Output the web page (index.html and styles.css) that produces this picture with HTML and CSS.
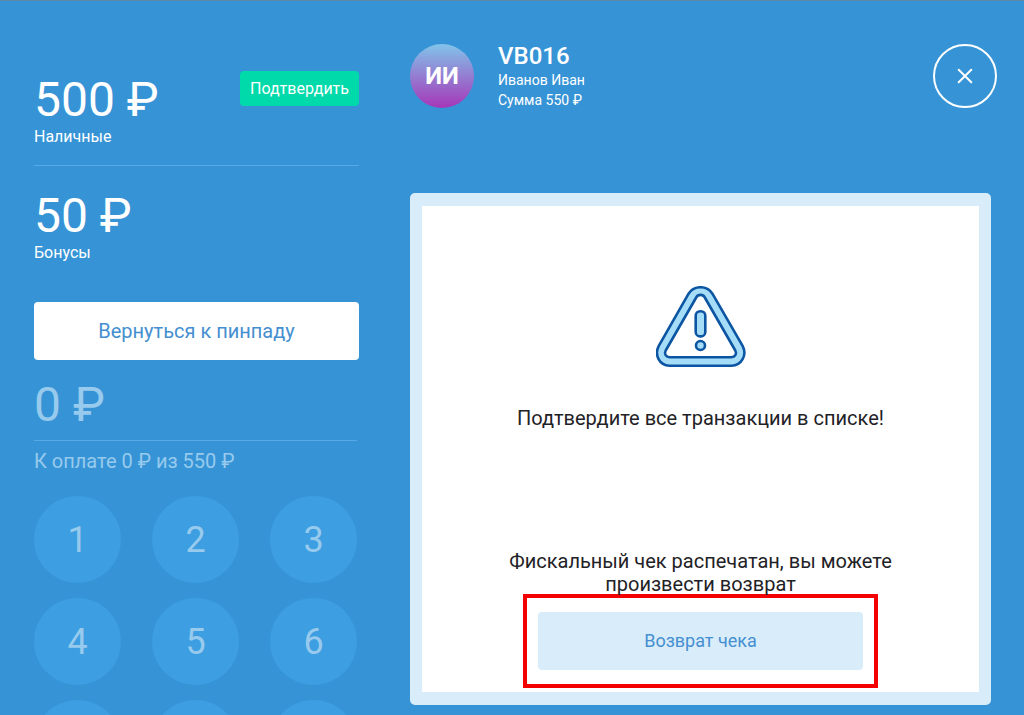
FILE: index.html
```html
<!DOCTYPE html>
<html lang="ru">
<head>
<meta charset="utf-8">
<title>Оплата</title>
<link rel="stylesheet" href="styles.css">
</head>
<body>
<div class="page">
  <aside class="payments">
    <section class="payment payment--divided">
      <div>
        <div class="amount">500 ₽</div>
        <div class="payment-label">Наличные</div>
      </div>
      <button class="confirm" type="button">Подтвердить</button>
    </section>
    <section class="payment">
      <div>
        <div class="amount">50 ₽</div>
        <div class="payment-label">Бонусы</div>
      </div>
    </section>
    <button class="back" type="button">Вернуться к пинпаду</button>
    <section class="pinpad">
      <div class="entry"><div class="amount">0 ₽</div></div>
      <div class="due">К оплате 0 ₽ из 550 ₽</div>
      <div class="keys">
        <button class="key" type="button">1</button>
        <button class="key" type="button">2</button>
        <button class="key" type="button">3</button>
        <button class="key" type="button">4</button>
        <button class="key" type="button">5</button>
        <button class="key" type="button">6</button>
        <button class="key" type="button" aria-label="7"></button>
        <button class="key" type="button" aria-label="8"></button>
        <button class="key" type="button" aria-label="9"></button>
      </div>
    </section>
  </aside>
  <main class="content">
    <header class="client">
      <div class="avatar">ИИ</div>
      <div class="client-info">
        <h1 class="client-code">VB016</h1>
        <div>Иванов Иван</div>
        <div>Сумма 550 ₽</div>
      </div>
      <button class="close" type="button" aria-label="Закрыть">
        <svg width="16" height="16" viewBox="0 0 16 16" fill="none" stroke="currentColor" stroke-width="2" stroke-linecap="round"><path d="M1.7 1.7 14.3 14.3M14.3 1.7 1.7 14.3"/></svg>
      </button>
    </header>
    <section class="panel">
      <div class="notice">
        <svg class="warning" width="90" height="82" viewBox="0 0 90 82" fill="none" stroke-linejoin="round">
          <path d="M32.6 7.7C38 -0.9 51 -0.9 56.400 7.700L86.600 59.800C91.400 69 85.600 79.700 75.500 79.700H13.500C3.400 79.700 -2 69 2.800 59.800Z" fill="#a5dcf8" stroke="#0b55a2" stroke-width="2.600"/>
          <path d="M40.200 11.500C42 8 47 8 48.800 11.500L79.300 64.500C81.200 68 79 71.200 75.300 71.200H13.700C10 71.200 7.800 68 9.700 64.500Z" fill="#fff" stroke="#0b55a2" stroke-width="2.600"/>
          <rect x="39.700" y="25.200" width="9.600" height="25.200" rx="4.500" fill="#a5dcf8" stroke="#0b55a2" stroke-width="2.600"/>
          <circle cx="44.500" cy="59.500" r="4.500" fill="#a5dcf8" stroke="#0b55a2" stroke-width="2.600"/>
        </svg>
        <p class="message">Подтвердите все транзакции в списке!</p>
      </div>
      <div class="refund">
        <p class="message">Фискальный чек распечатан, вы можете произвести возврат</p>
        <div class="refund-action">
          <button class="refund-button" type="button">Возврат чека</button>
        </div>
      </div>
    </section>
  </main>
</div>
</body>
</html>
```
FILE: styles.css
```css
* {
  box-sizing: border-box;
}

body {
  margin: 0;
  background: #3694d6;
  color: #fff;
  font-family: Roboto, "Noto Sans", sans-serif;
  font-size: 16px;
}

button {
  border: 0;
  padding: 0;
  font: inherit;
  cursor: pointer;
}

h1,
p {
  margin: 0;
}

.page {
  display: flex;
  gap: 51px;
  height: 100vh;
  padding: 0 27px 0 34px;
  border-top: 1px solid #6089a8;
  overflow: hidden;
}

.payments {
  flex: 0 0 325px;
  padding-top: 70px;
}

.payment {
  display: flex;
  justify-content: space-between;
  align-items: flex-start;
}

.payment--divided {
  padding-bottom: 18px;
  margin-bottom: 21px;
  border-bottom: 1px solid #57aae6;
}

.amount {
  margin-bottom: -2px;
  font-size: 48px;
  line-height: 58px;
}

.payment-label {
  line-height: 20px;
}

.confirm {
  padding: 0 10px;
  border-radius: 4px;
  background: #00d9a9;
  color: #fff;
  line-height: 35px;
}

.back {
  width: 100%;
  margin: 39px 0 16px;
  border-radius: 4px;
  background: #fff;
  color: #458fd0;
  font-size: 20px;
  line-height: 58px;
}

.pinpad {
  padding-right: 2px;
  color: #97caed;
}

.entry {
  padding-bottom: 8px;
  border-bottom: 1px solid #57aae6;
}

.due {
  margin: 8px 0 23px;
  font-size: 20px;
  line-height: 24px;
}

.keys {
  display: grid;
  grid-template-columns: repeat(3, 87px);
  justify-content: space-between;
  row-gap: 15px;
}

.key {
  height: 87px;
  border-radius: 50%;
  background: #3d9ee1;
  color: #97caed;
  font-size: 36px;
}

.content {
  flex: 1;
  display: flex;
  flex-direction: column;
  min-width: 0;
  padding: 43px 0 10px;
}

.client {
  display: flex;
  align-items: flex-start;
  gap: 24px;
  height: 64px;
  margin-bottom: 85px;
}

.avatar {
  width: 64px;
  border-radius: 50%;
  background: linear-gradient(#82c4ea, #a636b8);
  font-size: 24px;
  font-weight: 700;
  line-height: 64px;
  text-align: center;
}

.client-info {
  flex: 1;
  font-size: 14px;
  line-height: 20px;
}

.client-code {
  font-size: 24px;
  font-weight: 500;
  line-height: 24px;
  padding-bottom: 2px;
}

.close {
  display: grid;
  place-items: center;
  width: 64px;
  height: 64px;
  border: 2px solid #fff;
  border-radius: 50%;
  background: transparent;
  color: #fff;
}

.panel {
  flex: 1;
  display: flex;
  flex-direction: column;
  justify-content: space-between;
  margin-right: 6px;
  padding: 80px 72px 4px;
  border: solid #d9ecfa;
  border-width: 13px 12px;
  border-radius: 5px;
  background: #fff;
  color: #1f2226;
  text-align: center;
}

.warning {
  display: block;
  margin: 0 auto 39px;
}

.message {
  font-size: 20px;
  line-height: 23px;
}

.refund-action {
  width: 355px;
  margin: -2px auto 0;
  padding: 14px 11px;
  border: 4px solid #f40000;
}

.refund-button {
  width: 100%;
  border-radius: 4px;
  background: #d9ecfa;
  color: #458fd0;
  font-size: 18px;
  line-height: 58px;
}
```
